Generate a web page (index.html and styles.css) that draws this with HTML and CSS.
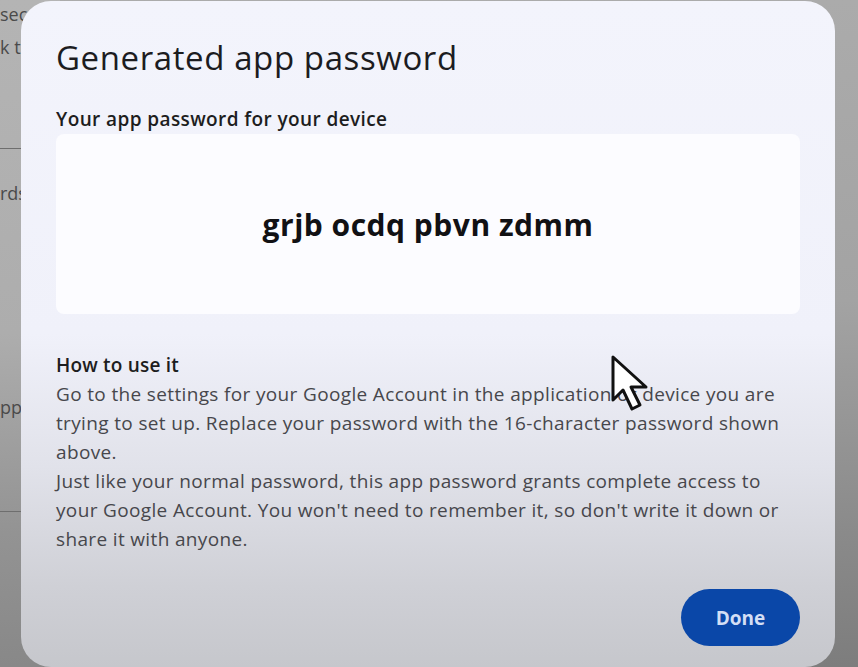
FILE: index.html
```html
<!DOCTYPE html>
<html lang="en">
<head>
<meta charset="utf-8">
<title>Generated app password</title>
<link rel="stylesheet" href="styles.css">
</head>
<body>
<div class="backdrop">
  <div class="bg-page">
    <div class="bg-line t1">sec</div>
    <div class="bg-line t2">k to</div>
    <div class="bg-rule r1"></div>
    <div class="bg-line t3">rds</div>
    <div class="bg-line t4">pp</div>
    <div class="bg-rule r2"></div>
  </div>

  <div class="dialog" role="dialog" aria-labelledby="dlg-title">
    <h1 id="dlg-title" class="title">Generated app password</h1>
    <div class="label">Your app password for your device</div>
    <div class="pw-box"><span class="pw">grjb ocdq pbvn zdmm</span></div>
    <div class="howto">
      <div class="howto-title">How to use it</div>
      <p class="howto-text first">Go to the settings for your Google Account in the application or device you are trying to set up. Replace your password with the 16-character password shown above.</p>
      <p class="howto-text">Just like your normal password, this app password grants complete access to your Google Account. You won't need to remember it, so don't write it down or share it with anyone.</p>
    </div>
    <div class="actions">
      <button class="done">Done</button>
    </div>
  </div>

  <svg class="cursor" width="42" height="60" viewBox="0 0 42 60" aria-hidden="true">
    <path d="M3 3 L3 46 L13 36 L22 55 L30 51 L21 33 L36 33 Z" fill="#ffffff" stroke="#111111" stroke-width="3" stroke-linejoin="round"/>
  </svg>
</div>
</body>
</html>
```

FILE: styles.css
```css
html, body {
  margin: 0;
  padding: 0;
  width: 858px;
  height: 667px;
  overflow: hidden;
}

body {
  font-family: "Open Sans", "Noto Sans", sans-serif;
}

.backdrop {
  position: relative;
  width: 858px;
  height: 667px;
  background: linear-gradient(180deg, #ababab 0%, #a3a3a3 45%, #8a8a8a 80%, #7d7d7d 100%);
  overflow: hidden;
}

.bg-page {
  width: 60px;
  height: 667px;
  display: flex;
  flex-direction: column;
  background: linear-gradient(180deg, #b4b4b4 0%, #adadad 50%, #939393 80%, #888888 100%);
}

.bg-line {
  font-size: 18px;
  line-height: 22px;
  color: #4a4a4a;
  white-space: nowrap;
}

.t1 { margin-top: 3px; }
.t2 { margin-top: 11px; }
.t3 { margin-top: 33px; }
.t4 { margin-top: 192px; }

.bg-rule {
  height: 1px;
  background: #6e6e6e;
}
.r1 { margin-top: 90px; }
.r2 { margin-top: 93px; }

.dialog {
  position: absolute;
  left: 21px;
  top: 1px;
  width: 814px;
  height: 666px;
  box-sizing: border-box;
  padding: 0 35px;
  border-radius: 30px;
  background: linear-gradient(180deg, #f3f4fc 0%, #f0f1fa 50%, #e1e2ea 70%, #cfd0d6 88%, #c6c7cc 100%);
  display: flex;
  flex-direction: column;
}

.title {
  margin: 35px 0 0 0;
  font-size: 33px;
  line-height: 44px;
  font-weight: 400;
  color: #1c1c1f;
  letter-spacing: 0.6px;
}

.label {
  margin-top: 27px;
  font-size: 19px;
  line-height: 24px;
  font-weight: 600;
  color: #1d1d20;
  letter-spacing: 0.4px;
}

.pw-box {
  margin-top: 3px;
  height: 180px;
  border-radius: 8px;
  background: #fcfcff;
  display: flex;
  align-items: center;
  justify-content: center;
}

.pw {
  font-size: 30px;
  font-weight: 700;
  color: #111114;
  letter-spacing: 0.5px;
}

.howto {
  margin-top: 38px;
}

.howto-title {
  font-size: 19px;
  line-height: 26px;
  font-weight: 600;
  color: #1d1d20;
  letter-spacing: 0.2px;
}

.howto-text {
  margin: 0;
  font-size: 19px;
  line-height: 29px;
  color: #47474c;
  letter-spacing: 0.35px;
}

.howto-text.first {
  margin-top: 2px;
}

.actions {
  margin-top: auto;
  margin-bottom: 21px;
  display: flex;
  justify-content: flex-end;
}

.done {
  width: 119px;
  height: 57px;
  border: none;
  border-radius: 29px;
  background: #0a47a8;
  color: #d3def5;
  font-family: inherit;
  font-size: 19px;
  font-weight: 700;
  cursor: pointer;
}

.cursor {
  position: absolute;
  left: 610px;
  top: 354px;
}
```
